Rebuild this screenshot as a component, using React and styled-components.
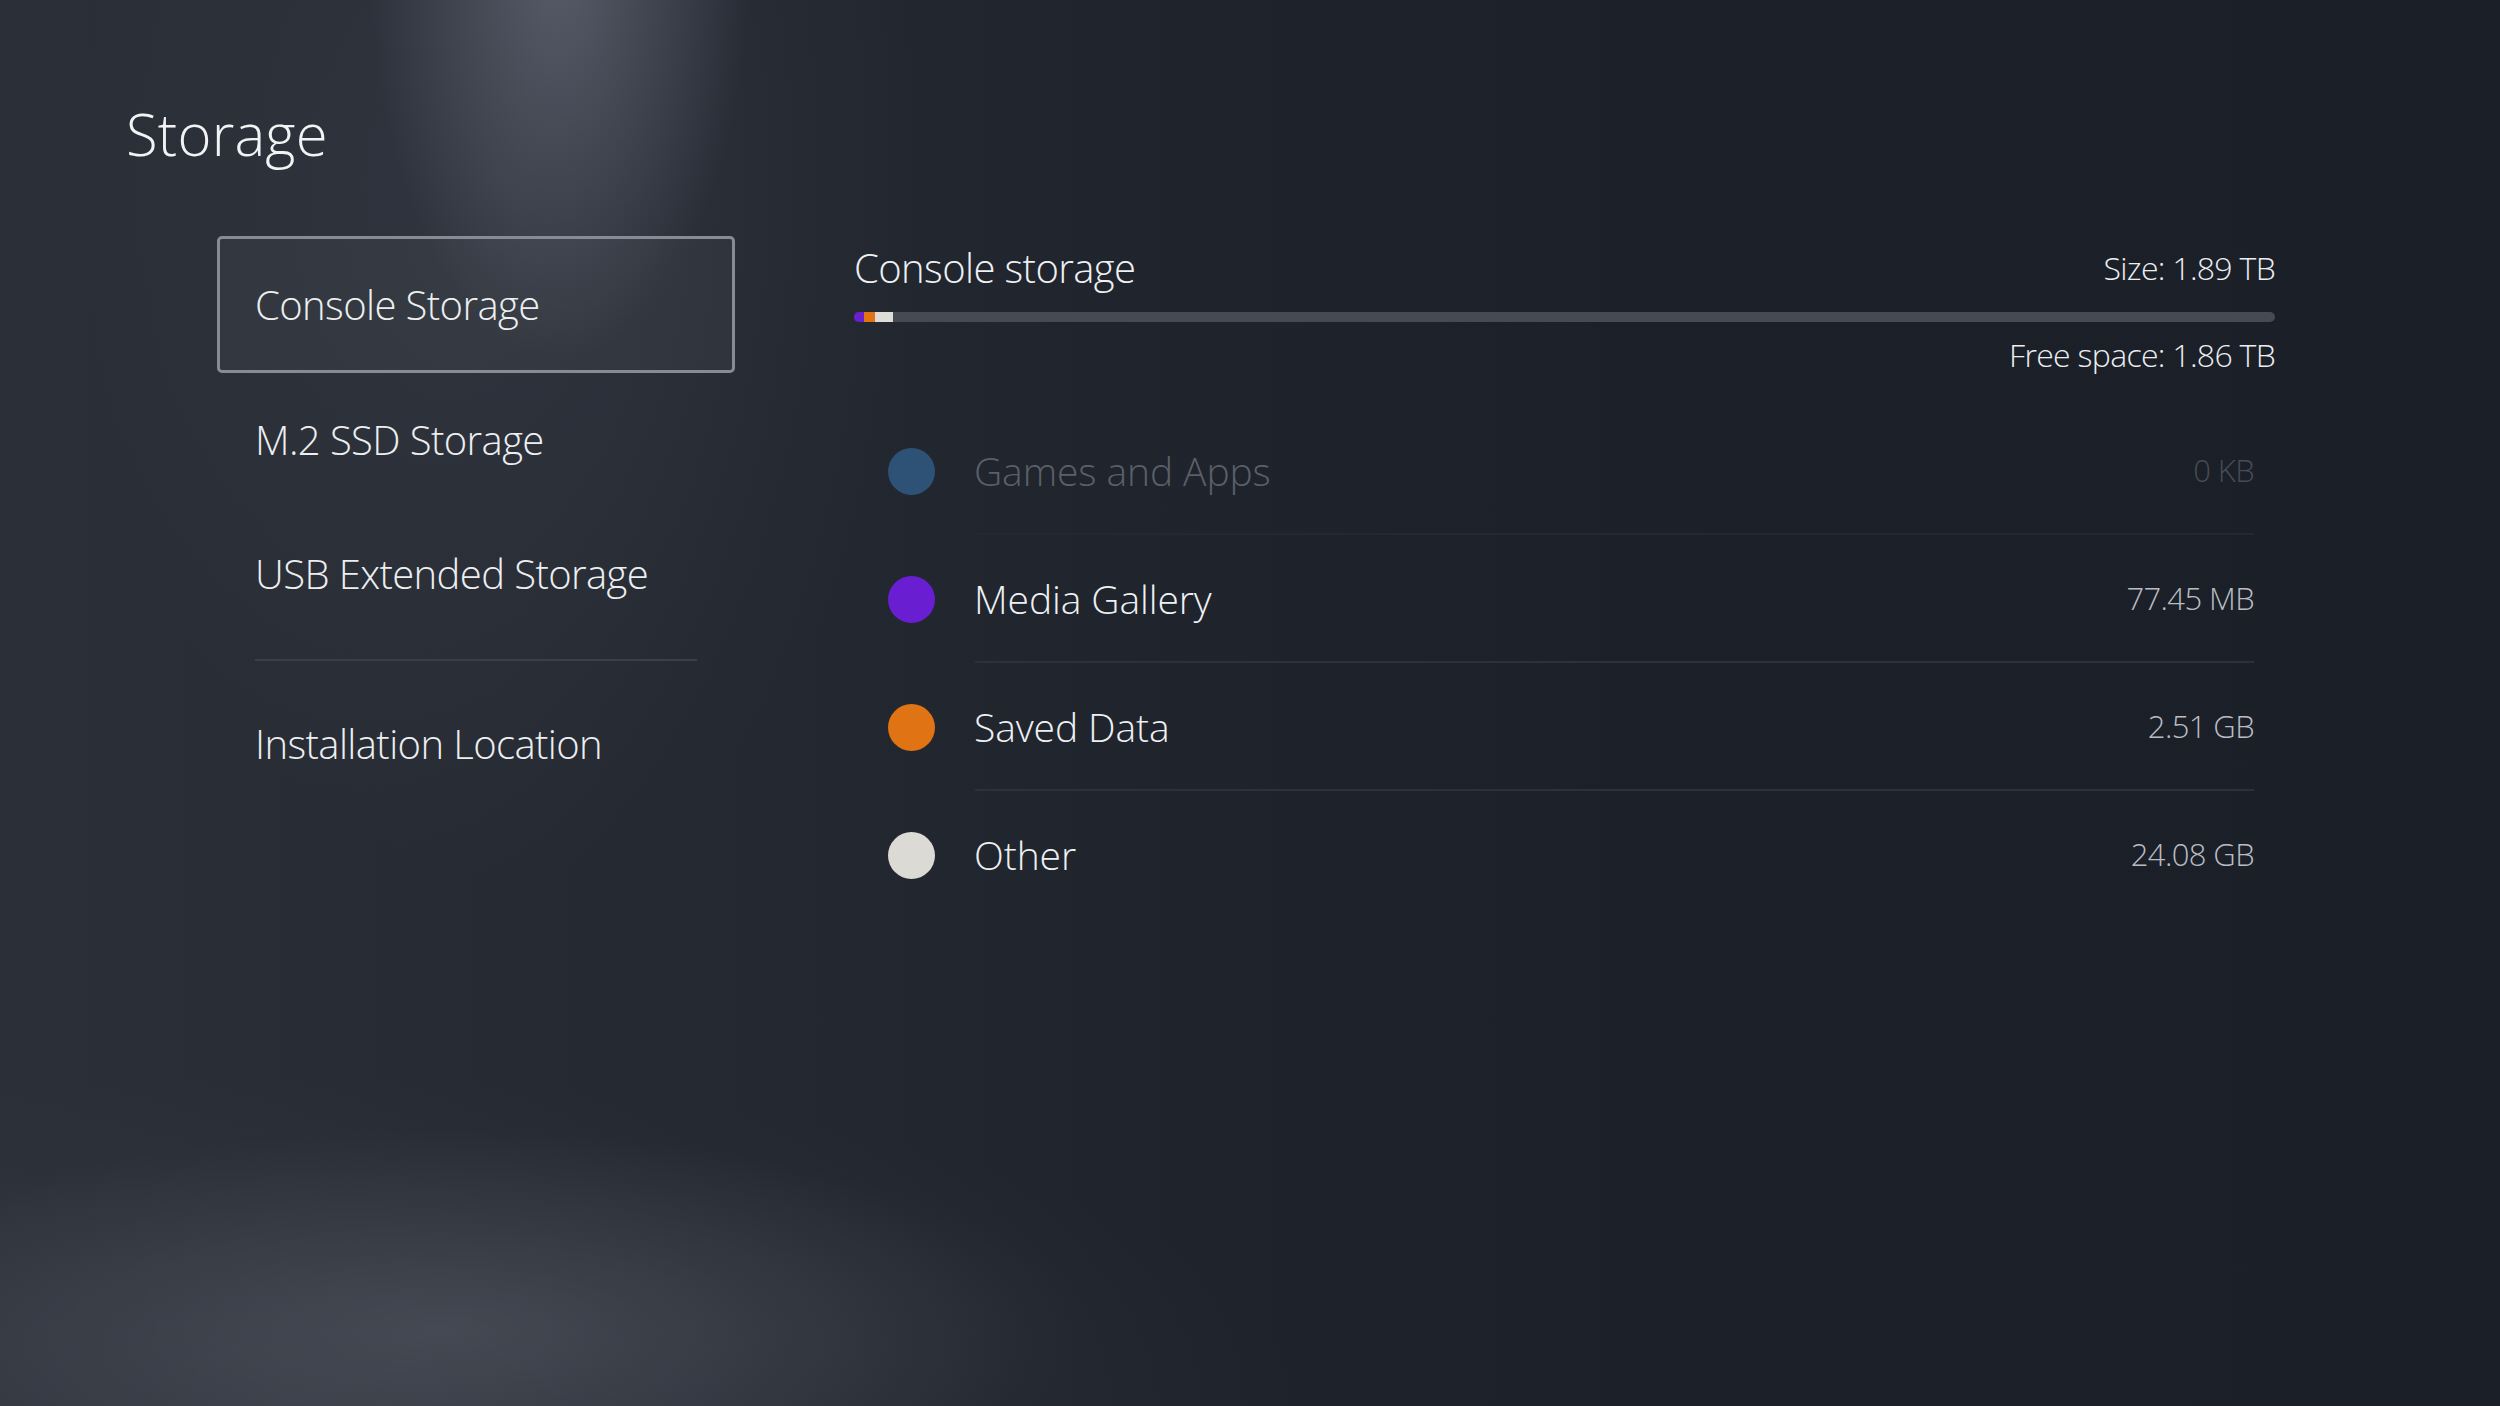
import React from "react";
import styled, { createGlobalStyle } from "styled-components";

const Global = createGlobalStyle`
  html, body { margin: 0; padding: 0; }
  body {
    width: 2500px;
    height: 1406px;
    overflow: hidden;
    background: #1b2029;
    font-family: "Open Sans", "Noto Sans", "Liberation Sans", sans-serif;
  }
`;

const Screen = styled.div`
  position: relative;
  width: 2500px;
  height: 1406px;
  box-sizing: border-box;
  padding: 105px 0 0 126px;
  color: #eef0f2;
  background:
    radial-gradient(ellipse 190px 400px at 560px -40px, rgba(150, 156, 172, 0.40), rgba(150, 156, 172, 0) 100%),
    radial-gradient(ellipse 420px 700px at 500px 180px, rgba(110, 116, 130, 0.14), rgba(110, 116, 130, 0) 100%),
    radial-gradient(ellipse 640px 200px at 440px 1330px, rgba(110, 114, 124, 0.36), rgba(110, 114, 124, 0) 100%),
    radial-gradient(ellipse 1000px 330px at 300px 1406px, rgba(70, 75, 86, 0.30), rgba(70, 75, 86, 0) 100%),
    linear-gradient(90deg, #2a2f38 0%, #252a33 22%, #1f242d 45%, #1b2029 65%, #1a1f28 100%);
`;

const Title = styled.h1`
  margin: 0;
  font-size: 58px;
  line-height: 58px;
  font-weight: 300;
  letter-spacing: 0.2px;
  color: #f2f3f5;
`;

const Body = styled.div`
  display: flex;
  align-items: flex-start;
  margin-top: 73px;
  padding-left: 91px;
`;

const Menu = styled.nav`
  display: flex;
  flex-direction: column;
  width: 518px;
`;

const MenuItem = styled.div`
  display: flex;
  align-items: center;
  height: ${p => (p.$selected ? "137px" : "134px")};
  box-sizing: border-box;
  padding-left: ${p => (p.$selected ? "35px" : "38px")};
  font-size: 40px;
  line-height: 40px;
  font-weight: 300;
  letter-spacing: -0.6px;
  color: #eceef0;
  border: ${p => (p.$selected ? "3px solid #868b94" : "none")};
  border-radius: 5px;
  background: ${p => (p.$selected ? "rgba(255,255,255,0.035)" : "transparent")};
`;

const MenuDivider = styled.div`
  height: 2px;
  width: 442px;
  margin: 18px 0 16px 38px;
  background: #3a4049;
`;

const Panel = styled.section`
  display: flex;
  flex-direction: column;
  width: 1421px;
  margin-left: 119px;
  padding-top: 12px;
`;

const HeaderRow = styled.div`
  display: flex;
  justify-content: space-between;
  align-items: flex-start;
`;

const PanelTitle = styled.h2`
  margin: 0;
  font-size: 40px;
  line-height: 40px;
  font-weight: 300;
  letter-spacing: -0.6px;
  color: #eef0f2;
`;

const Stat = styled.div`
  font-size: 32px;
  line-height: 32px;
  font-weight: 300;
  letter-spacing: -0.7px;
  color: #eceef0;
  text-align: right;
`;

const SizeStat = styled(Stat)`
  margin-top: 4px;
`;

const Bar = styled.div`
  display: flex;
  height: 10px;
  margin-top: 24px;
  border-radius: 5px;
  overflow: hidden;
  background: #464b53;
`;

const Segment = styled.div`
  height: 100%;
  background: ${p => p.$color};
`;

const FreeSpace = styled(Stat)`
  margin-top: 17px;
`;

const List = styled.div`
  display: flex;
  flex-direction: column;
  margin-top: 36px;
  padding: 0 21px 0 34px;
`;

const Row = styled.div`
  display: flex;
  align-items: center;
`;

const Dot = styled.span`
  flex: none;
  width: 47px;
  height: 47px;
  border-radius: 50%;
  margin-right: 40px;
  background: ${p => p.$color};
`;

const RowContent = styled.div`
  flex: 1;
  display: flex;
  align-items: center;
  justify-content: space-between;
  height: 128px;
  box-sizing: border-box;
  border-bottom: 2px solid ${p => p.$line};
`;

const Label = styled.span`
  margin-left: -1px;
  font-size: 39px;
  line-height: 39px;
  font-weight: 300;
  letter-spacing: -0.1px;
  color: ${p => (p.$dim ? "#5a6068" : "#eef0f2")};
`;

const Value = styled.span`
  font-size: 31px;
  line-height: 31px;
  font-weight: 300;
  letter-spacing: -0.6px;
  color: ${p => (p.$dim ? "#464c55" : "#b9bdc3")};
`;

const rows = [
  { label: "Games and Apps", value: "0 KB", color: "#2d5276", dim: true, line: "#232930" },
  { label: "Media Gallery", value: "77.45 MB", color: "#6a1ed2", line: "#2c323b" },
  { label: "Saved Data", value: "2.51 GB", color: "#e07313", line: "#2c323b" },
  { label: "Other", value: "24.08 GB", color: "#dcdad4", line: "transparent" },
];

export default function App() {
  return (
    <>
      <Global />
      <Screen>
        <Title>Storage</Title>
        <Body>
          <Menu>
            <MenuItem $selected>Console Storage</MenuItem>
            <MenuItem>M.2 SSD Storage</MenuItem>
            <MenuItem>USB Extended Storage</MenuItem>
            <MenuDivider />
            <MenuItem>Installation Location</MenuItem>
          </Menu>
          <Panel>
            <HeaderRow>
              <PanelTitle>Console storage</PanelTitle>
              <SizeStat>Size: 1.89 TB</SizeStat>
            </HeaderRow>
            <Bar>
              <Segment $color="#6a1ed2" style={{ width: 10 }} />
              <Segment $color="#e07313" style={{ width: 11 }} />
              <Segment $color="#dedcd8" style={{ width: 18 }} />
            </Bar>
            <FreeSpace>Free space: 1.86 TB</FreeSpace>
            <List>
              {rows.map(r => (
                <Row key={r.label}>
                  <Dot $color={r.color} />
                  <RowContent $line={r.line}>
                    <Label $dim={r.dim}>{r.label}</Label>
                    <Value $dim={r.dim}>{r.value}</Value>
                  </RowContent>
                </Row>
              ))}
            </List>
          </Panel>
        </Body>
      </Screen>
    </>
  );
}
